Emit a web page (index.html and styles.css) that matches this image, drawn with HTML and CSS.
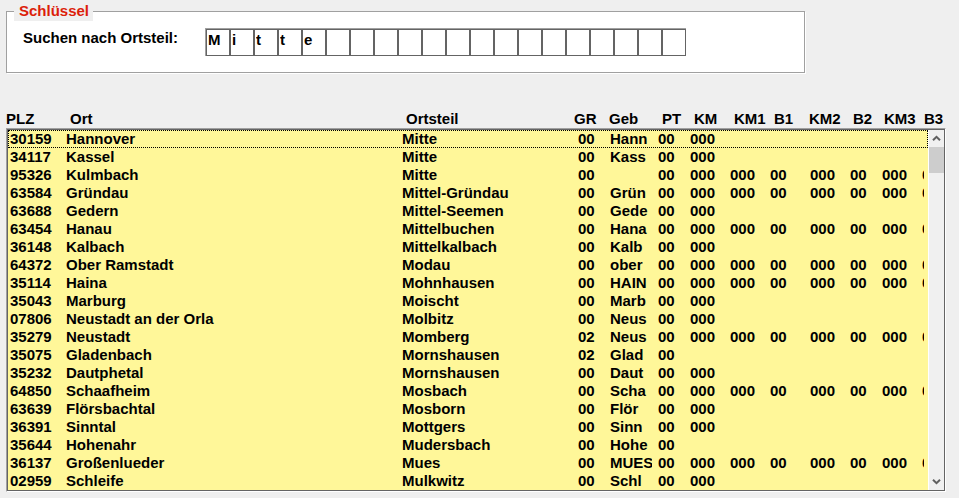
FILE: index.html
```html
<!DOCTYPE html>
<html lang="de">
<head>
<meta charset="utf-8">
<title>Ortsteilsuche</title>
<link rel="stylesheet" href="styles.css">
</head>
<body>
<form class="search">
<fieldset class="group">
<legend>Schlüssel</legend>
<div class="field">
<label for="c1">Suchen nach Ortsteil:</label>
<div class="cells">
<input id="c1" maxlength="1" value="M">
<input aria-label="Zeichen 2" maxlength="1" value="i">
<input aria-label="Zeichen 3" maxlength="1" value="t">
<input aria-label="Zeichen 4" maxlength="1" value="t">
<input aria-label="Zeichen 5" maxlength="1" value="e">
<input aria-label="Zeichen 6" maxlength="1">
<input aria-label="Zeichen 7" maxlength="1">
<input aria-label="Zeichen 8" maxlength="1">
<input aria-label="Zeichen 9" maxlength="1">
<input aria-label="Zeichen 10" maxlength="1">
<input aria-label="Zeichen 11" maxlength="1">
<input aria-label="Zeichen 12" maxlength="1">
<input aria-label="Zeichen 13" maxlength="1">
<input aria-label="Zeichen 14" maxlength="1">
<input aria-label="Zeichen 15" maxlength="1">
<input aria-label="Zeichen 16" maxlength="1">
<input aria-label="Zeichen 17" maxlength="1">
<input aria-label="Zeichen 18" maxlength="1">
<input aria-label="Zeichen 19" maxlength="1">
<input aria-label="Zeichen 20" maxlength="1">
</div>
</div>
</fieldset>
</form>
<main class="results">
<table>
<thead>
<tr><th>PLZ</th><th>Ort</th><th>Ortsteil</th><th>GR</th><th>Geb</th><th>PT</th><th>KM</th><th>KM1</th><th>B1</th><th>KM2</th><th>B2</th><th>KM3</th><th>B3</th></tr>
</thead>
<tbody>
<tr class="focused"><td>30159</td><td>Hannover</td><td>Mitte</td><td>00</td><td>Hann</td><td>00</td><td>000</td></tr>
<tr><td>34117</td><td>Kassel</td><td>Mitte</td><td>00</td><td>Kass</td><td>00</td><td>000</td></tr>
<tr><td>95326</td><td>Kulmbach</td><td>Mitte</td><td>00</td><td></td><td>00</td><td>000</td><td>000</td><td>00</td><td>000</td><td>00</td><td>000</td><td>00</td></tr>
<tr><td>63584</td><td>Gründau</td><td>Mittel-Gründau</td><td>00</td><td>Grün</td><td>00</td><td>000</td><td>000</td><td>00</td><td>000</td><td>00</td><td>000</td><td>00</td></tr>
<tr><td>63688</td><td>Gedern</td><td>Mittel-Seemen</td><td>00</td><td>Gede</td><td>00</td><td>000</td></tr>
<tr><td>63454</td><td>Hanau</td><td>Mittelbuchen</td><td>00</td><td>Hana</td><td>00</td><td>000</td><td>000</td><td>00</td><td>000</td><td>00</td><td>000</td><td>00</td></tr>
<tr><td>36148</td><td>Kalbach</td><td>Mittelkalbach</td><td>00</td><td>Kalb</td><td>00</td><td>000</td></tr>
<tr><td>64372</td><td>Ober Ramstadt</td><td>Modau</td><td>00</td><td>ober</td><td>00</td><td>000</td><td>000</td><td>00</td><td>000</td><td>00</td><td>000</td><td>00</td></tr>
<tr><td>35114</td><td>Haina</td><td>Mohnhausen</td><td>00</td><td>HAIN</td><td>00</td><td>000</td><td>000</td><td>00</td><td>000</td><td>00</td><td>000</td><td>00</td></tr>
<tr><td>35043</td><td>Marburg</td><td>Moischt</td><td>00</td><td>Marb</td><td>00</td><td>000</td></tr>
<tr><td>07806</td><td>Neustadt an der Orla</td><td>Molbitz</td><td>00</td><td>Neus</td><td>00</td><td>000</td></tr>
<tr><td>35279</td><td>Neustadt</td><td>Momberg</td><td>02</td><td>Neus</td><td>00</td><td>000</td><td>000</td><td>00</td><td>000</td><td>00</td><td>000</td><td>00</td></tr>
<tr><td>35075</td><td>Gladenbach</td><td>Mornshausen</td><td>02</td><td>Glad</td><td>00</td></tr>
<tr><td>35232</td><td>Dautphetal</td><td>Mornshausen</td><td>00</td><td>Daut</td><td>00</td><td>000</td></tr>
<tr><td>64850</td><td>Schaafheim</td><td>Mosbach</td><td>00</td><td>Scha</td><td>00</td><td>000</td><td>000</td><td>00</td><td>000</td><td>00</td><td>000</td><td>00</td></tr>
<tr><td>63639</td><td>Flörsbachtal</td><td>Mosborn</td><td>00</td><td>Flör</td><td>00</td><td>000</td></tr>
<tr><td>36391</td><td>Sinntal</td><td>Mottgers</td><td>00</td><td>Sinn</td><td>00</td><td>000</td></tr>
<tr><td>35644</td><td>Hohenahr</td><td>Mudersbach</td><td>00</td><td>Hohe</td><td>00</td></tr>
<tr><td>36137</td><td>Großenlueder</td><td>Mues</td><td>00</td><td>MUES</td><td>00</td><td>000</td><td>000</td><td>00</td><td>000</td><td>00</td><td>000</td><td>00</td></tr>
<tr><td>02959</td><td>Schleife</td><td>Mulkwitz</td><td>00</td><td>Schl</td><td>00</td><td>000</td></tr>
</tbody>
</table>
<div class="scrollbar">
<button type="button" aria-label="Nach oben"><svg width="9" height="7" viewBox="0 0 9 7"><path d="M1 5.3 4.5 1.8 8 5.3"/></svg></button>
<div class="track"><div class="thumb"></div></div>
<button type="button" aria-label="Nach unten"><svg width="9" height="7" viewBox="0 0 9 7"><path d="M1 1.7 4.5 5.2 8 1.7"/></svg></button>
</div>
</main>
</body>
</html>
```
FILE: styles.css
```css
* {
  box-sizing: border-box;
}

body {
  margin: 0;
  padding: 1px 13px 6px 6px;
  background: #efefef;
  color: #000;
  font: bold 15px/18px "Liberation Sans", Arial, sans-serif;
}

.group {
  max-width: 799px;
  margin: 0;
  padding: 7px 16px 16px;
  border: 1px solid #a0a0a0;
  background: #fff;
  box-shadow: 1px 1px #fff;
}

legend {
  margin-left: -9px;
  padding: 0 4px 0 5px;
  background: #efefef;
  color: #dc1e0a;
  line-height: 20px;
}

.field {
  display: flex;
  align-items: flex-start;
}

.field label {
  flex: 0 0 182px;
  padding-top: 1px;
}

.cells {
  display: flex;
  border: solid #a0a0a0;
  border-width: 1px 0 0 1px;
}

.cells input {
  width: 24px;
  height: 27px;
  padding: 0 1px 6px;
  border: 1px solid #646464;
  border-radius: 0;
  background: #fff;
  color: #000;
  font: inherit;
  outline: 0;
}

.results {
  position: relative;
  margin-top: 37px;
}

table,
tbody {
  display: block;
}

table {
  border-spacing: 0;
}

thead {
  display: block;
}

tr {
  display: grid;
}

th,
td {
  padding: 0;
  overflow: hidden;
  text-align: left;
  white-space: nowrap;
}

thead tr {
  grid-template-columns: 64px 336px 168px 35px 53px 32px 40px 40px 35px 44px 31px 40px 1fr;
}

tbody {
  padding: 1px;
  border: 1px solid;
  border-color: #a0a0a0 #fff #fff #a0a0a0;
  background: #fff799;
  box-shadow: inset 0 0 0 1px #646464;
}

tbody tr {
  grid-template-columns: 56px 336px 176px 32px 48px 32px 40px 40px 40px 40px 32px 40px 2px;
  height: 18px;
  margin-right: 16px;
  padding-left: 2px;
}

td:nth-child(5) {
  margin-right: 6px;
}

.focused {
  outline: 1px dotted #000;
  outline-offset: -1px;
}

.scrollbar {
  position: absolute;
  top: 20px;
  right: 2px;
  bottom: 2px;
  display: flex;
  flex-direction: column;
  width: 16px;
  border-left: 1px solid #fff;
  background: #f0f0f0;
}

.scrollbar button {
  display: grid;
  place-items: center;
  height: 17px;
  padding: 0;
  border: 0;
  background: none;
}

.scrollbar path {
  fill: none;
  stroke: #606060;
  stroke-width: 2;
}

.track {
  flex: 1;
}

.thumb {
  height: 26px;
  background: #cdcdcd;
}
```
